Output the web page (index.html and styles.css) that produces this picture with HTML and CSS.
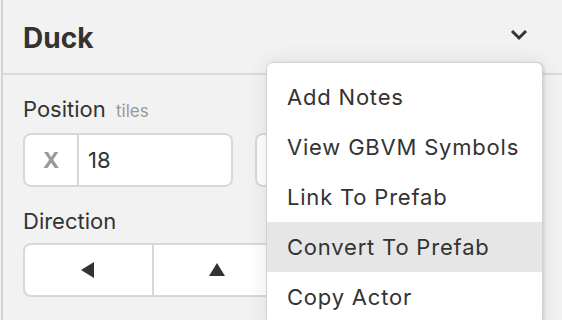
FILE: index.html
```html
<!DOCTYPE html>
<html lang="en">
<head>
  <meta charset="UTF-8" />
  <title>Duck</title>
  <link rel="stylesheet" href="styles.css">
</head>
<body>
  <div class="sidebar">
    <header class="panel-header">
      <h1>Duck</h1>
      <svg class="chevron" width="18" height="12" viewBox="0 0 18 12">
        <path d="M2 2 L9 9 L16 2" fill="none" stroke="#333" stroke-width="3" />
      </svg>
    </header>

    <section class="field">
      <label class="field-label">Position <span class="hint">tiles</span></label>
      <div class="coord-row">
        <div class="coord">
          <span class="coord-axis">X</span>
          <span class="coord-value">18</span>
        </div>
        <div class="coord">
          <span class="coord-axis"></span>
          <span class="coord-value"></span>
        </div>
      </div>
    </section>

    <section class="field">
      <label class="field-label">Direction</label>
      <div class="dir-group">
        <button class="dir-btn">
          <svg width="14" height="16" viewBox="0 0 14 16"><polygon points="0,8 13,0 13,16" fill="#333" /></svg>
        </button>
        <button class="dir-btn">
          <svg width="16" height="14" viewBox="0 0 16 14"><polygon points="8,0 16,13 0,13" fill="#333" /></svg>
        </button>
        <button class="dir-btn">
          <svg width="16" height="14" viewBox="0 0 16 14"><polygon points="0,0 16,0 8,13" fill="#333" /></svg>
        </button>
        <button class="dir-btn">
          <svg width="14" height="16" viewBox="0 0 14 16"><polygon points="0,0 13,8 0,16" fill="#333" /></svg>
        </button>
      </div>
    </section>

    <ul class="menu">
      <li>Add Notes</li>
      <li>View GBVM Symbols</li>
      <li>Link To Prefab</li>
      <li class="active">Convert To Prefab</li>
      <li>Copy Actor</li>
    </ul>
  </div>
</body>
</html>
```

FILE: styles.css
```css
body {
  margin: 0;
  background-color: #f2f2f2;
  font-family: Inter, "Noto Sans", sans-serif;
  color: #333;
  overflow: hidden;
}
.sidebar {
  position: relative;
  margin-left: 1px;
  height: 320px;
  border-left: 2px solid #d4d4d4;
}
.panel-header {
  display: flex;
  align-items: center;
  justify-content: space-between;
  height: 73px;
  padding: 0 34px 0 20px;
  border-bottom: 2px solid #d9d9d9;
}
.panel-header h1 {
  margin: 3px 0 0;
  font-size: 28px;
  font-weight: 700;
}
.chevron {
  margin-top: -4px;
}
.field {
  padding: 0 20px;
}
.field-label {
  display: block;
  font-size: 22px;
  line-height: 26px;
  margin: 21px 0 9px;
}
.hint {
  font-size: 17px;
  color: #999;
  margin-left: 4px;
}
.coord-row {
  display: flex;
  gap: 22px;
}
.coord {
  display: flex;
  width: 206px;
  height: 50px;
  background: white;
  border: 2px solid #d8d8d8;
  border-radius: 8px;
  font-size: 22px;
  line-height: 50px;
}
.coord-axis {
  width: 52px;
  text-align: center;
  font-weight: 700;
  color: #999;
  border-right: 2px solid #d8d8d8;
}
.coord-value {
  padding-left: 9px;
}
.dir-group {
  display: flex;
  width: 516px;
  height: 54px;
  box-sizing: border-box;
  background: white;
  border: 2px solid #d8d8d8;
  border-radius: 8px;
  overflow: hidden;
}
.dir-btn {
  flex: 1;
  display: flex;
  align-items: center;
  justify-content: center;
  background: none;
  border: none;
  border-right: 2px solid #d8d8d8;
  padding: 0;
}
.dir-btn:last-child {
  border-right: none;
}
.menu {
  position: absolute;
  left: 263px;
  top: 62px;
  width: 275px;
  margin: 0;
  padding: 9px 0;
  list-style: none;
  background: white;
  border: 1px solid #d0d0d0;
  border-radius: 7px;
  box-shadow: 0 0 22px rgba(0, 0, 0, 0.09), 2px 0 2px rgba(0, 0, 0, 0.08);
}
.menu li {
  height: 50px;
  line-height: 50px;
  padding-left: 20px;
  font-size: 22px;
  letter-spacing: 0.8px;
}
.menu li.active {
  background-color: #e6e6e6;
}
```
